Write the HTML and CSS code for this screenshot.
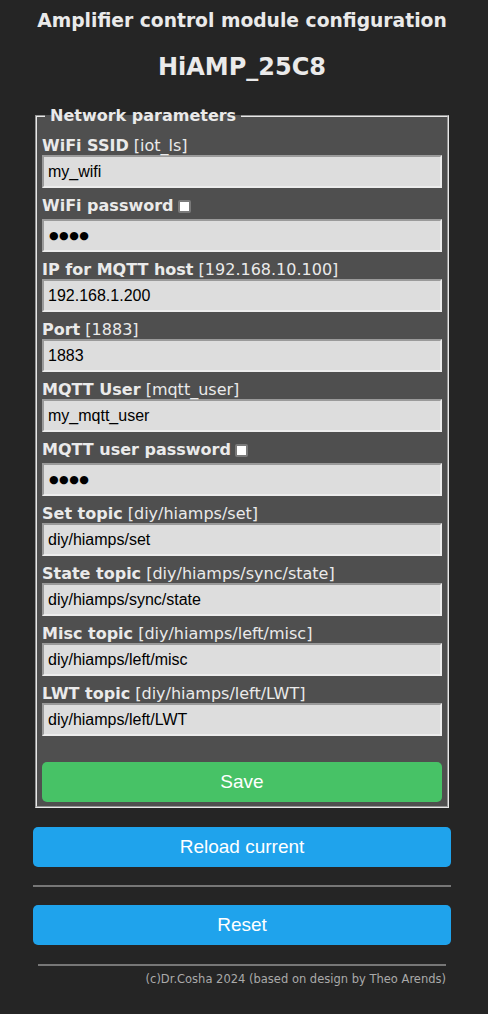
FILE: index.html
```html
<!DOCTYPE html>
<html>
<head>
<meta charset="utf-8">
<link rel="stylesheet" href="styles.css">
</head>
<body>
<div class="wrap">
  <h3 class="title">Amplifier control module configuration</h3>
  <h2 class="device">HiAMP_25C8</h2>
  <form class="cfg">
    <fieldset class="box">
      <legend class="legend">Network parameters</legend>
      <div class="row">
        <div class="lbl"><b>WiFi SSID</b> [iot_ls]</div>
        <input class="field" type="text" value="my_wifi">
      </div>
      <div class="row">
        <div class="lbl lbl-pw"><b>WiFi password</b><input class="chk" type="checkbox"></div>
        <input class="field field-pw" type="text" value="●●●●">
      </div>
      <div class="row">
        <div class="lbl"><b>IP for MQTT host</b> [192.168.10.100]</div>
        <input class="field" type="text" value="192.168.1.200">
      </div>
      <div class="row">
        <div class="lbl"><b>Port</b> [1883]</div>
        <input class="field" type="text" value="1883">
      </div>
      <div class="row">
        <div class="lbl"><b>MQTT User</b> [mqtt_user]</div>
        <input class="field" type="text" value="my_mqtt_user">
      </div>
      <div class="row">
        <div class="lbl lbl-pw"><b>MQTT user password</b><input class="chk" type="checkbox"></div>
        <input class="field field-pw" type="text" value="●●●●">
      </div>
      <div class="row">
        <div class="lbl"><b>Set topic</b> [diy/hiamps/set]</div>
        <input class="field" type="text" value="diy/hiamps/set">
      </div>
      <div class="row">
        <div class="lbl"><b>State topic</b> [diy/hiamps/sync/state]</div>
        <input class="field" type="text" value="diy/hiamps/sync/state">
      </div>
      <div class="row">
        <div class="lbl"><b>Misc topic</b> [diy/hiamps/left/misc]</div>
        <input class="field" type="text" value="diy/hiamps/left/misc">
      </div>
      <div class="row">
        <div class="lbl"><b>LWT topic</b> [diy/hiamps/left/LWT]</div>
        <input class="field" type="text" value="diy/hiamps/left/LWT">
      </div>
      <button class="btn btn-save" type="button">Save</button>
    </fieldset>
  </form>
  <button class="btn btn-blue btn-reload" type="button">Reload current</button>
  <hr class="sep">
  <button class="btn btn-blue btn-reset" type="button">Reset</button>
  <hr class="sep sep-foot">
  <div class="foot">(c)Dr.Cosha 2024 (based on design by Theo Arends)</div>
</div>
</body>
</html>
```
FILE: styles.css
```css
html, body {
  margin: 0;
  padding: 0;
  background: #252525;
}
body {
  color: #eaeaea;
  font-family: "DejaVu Sans", Verdana, sans-serif;
  font-size: 16px;
}
.wrap {
  width: 418px;
  margin-left: 33px;
  text-align: left;
}
.title {
  margin: 10px 0 0;
  font-size: 18.72px;
  line-height: 22px;
  font-weight: bold;
  text-align: center;
}
.device {
  margin: 21px 0 0;
  font-size: 24px;
  line-height: 28px;
  font-weight: bold;
  text-align: center;
}
.cfg {
  margin: 0;
}
.box {
  margin: 26px 2px 0;
  padding: 12px 5px 4px;
  border: 2px groove #e8e8e8;
  background: #4f4f4f;
  min-width: 0;
}
.legend {
  margin-left: 3px;
  padding: 0 5px;
  font-weight: bold;
  line-height: 18px;
}
.row {
  margin-bottom: 9px;
}
.lbl {
  line-height: 18px;
  height: 18px;
  white-space: nowrap;
}
.lbl-pw {
  height: 22px;
}
.chk {
  appearance: none;
  -webkit-appearance: none;
  display: inline-block;
  box-sizing: border-box;
  width: 13px;
  height: 13px;
  margin: 0 0 0 4px;
  vertical-align: -2px;
  background: #fff;
  border: 2px solid #7a7a7a;
  border-radius: 2px;
}
.field {
  display: block;
  box-sizing: border-box;
  width: 100%;
  height: 33px;
  margin: 0;
  padding: 4px;
  font-family: "Liberation Sans", Arial, sans-serif;
  font-size: 16px;
  color: #000;
  background: #dddddd;
  border-style: solid;
  border-width: 2px;
  border-color: #9a9a9a #ececec #ececec #9a9a9a;
  outline: none;
}
.field-pw {
  padding-left: 5px;
  font-family: "DejaVu Sans", sans-serif;
  font-size: 11px;
  letter-spacing: 0.5px;
}
.btn {
  display: block;
  width: 100%;
  height: 40px;
  border: 0;
  border-radius: 5px;
  color: #fff;
  font-family: "Liberation Sans", Arial, sans-serif;
  font-size: 19px;
  line-height: 40px;
  padding: 0;
  text-align: center;
}
.btn-save {
  margin-top: 26px;
  background: #47c266;
}
.btn-blue {
  background: #1fa3ec;
}
.btn-reload {
  margin-top: 19px;
}
.sep {
  margin: 18px 0 0;
  height: 0;
  border: 0;
  border-top: 2px solid #777;
}
.btn-reset {
  margin-top: 18px;
}
.sep-foot {
  margin: 19px 5px 0;
}
.foot {
  margin: 6px 5px 0;
  text-align: right;
  font-size: 11.5px;
  line-height: 14px;
  color: #aaa;
}
```
